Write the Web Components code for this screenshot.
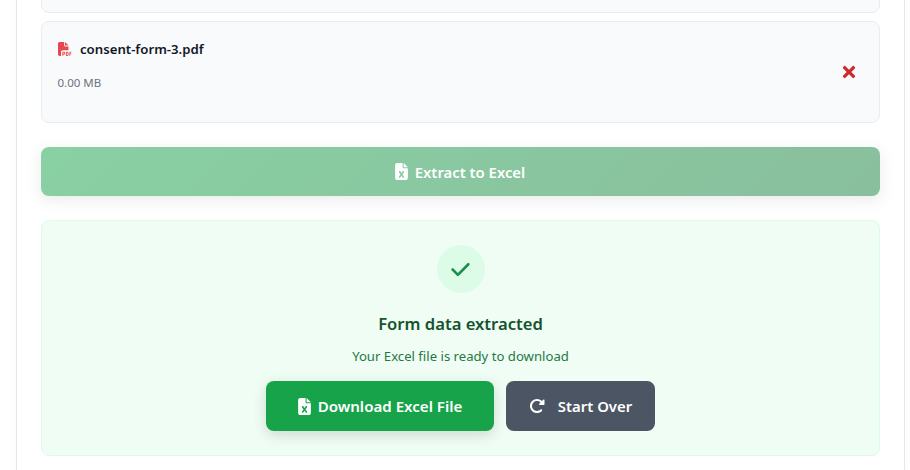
<!DOCTYPE html>
<html lang="en">
<head>
<meta charset="utf-8">
<title>Form extractor</title>
<style>
	html, body {
		margin: 0;
		height: 470px;
		overflow: hidden;
		background: #fff;
		font-family: "Noto Sans", "Open Sans", sans-serif;
	}
</style>
</head>
<body>
<app-card>
	<file-item></file-item>
	<file-item name="consent-form-3.pdf" size="0.00 MB"></file-item>
	<extract-button>Extract to Excel</extract-button>
	<success-panel heading="Form data extracted" message="Your Excel file is ready to download">
		<action-button icon="excel" kind="primary">Download Excel File</action-button>
		<action-button icon="redo" kind="secondary">Start Over</action-button>
	</success-panel>
</app-card>

<script>
const icons = {
	pdf: ['0 0 512 512', 'M0 64C0 28.7 28.7 0 64 0H224V128c0 17.7 14.3 32 32 32H384V304H176c-35.3 0-64 28.7-64 64V512H64c-35.3 0-64-28.7-64-64V64zm384 64H256V0L384 128zM176 352h32c30.9 0 56 25.1 56 56s-25.1 56-56 56H192v32c0 8.8-7.2 16-16 16s-16-7.2-16-16V448 368c0-8.8 7.2-16 16-16zm32 80c13.3 0 24-10.7 24-24s-10.7-24-24-24H192v48h16zm96-80h32c26.5 0 48 21.5 48 48v64c0 26.5-21.5 48-48 48H304c-8.8 0-16-7.2-16-16V368c0-8.8 7.2-16 16-16zm32 128c8.8 0 16-7.2 16-16V400c0-8.8-7.2-16-16-16H320v96h16zm80-112c0-8.8 7.2-16 16-16h48c8.8 0 16 7.2 16 16s-7.2 16-16 16H448v32h32c8.8 0 16 7.2 16 16s-7.2 16-16 16H448v48c0 8.8-7.2 16-16 16s-16-7.2-16-16V432 368z'],
	excel: ['0 0 384 512', 'M64 0C28.7 0 0 28.7 0 64V448c0 35.3 28.7 64 64 64H320c35.3 0 64-28.7 64-64V160H256c-17.7 0-32-14.3-32-32V0H64zM256 0V128H384L256 0zM155.7 250.2L192 302.1l36.3-51.9c7.6-10.9 22.6-13.5 33.4-5.9s13.5 22.6 5.9 33.4L221.3 344l46.4 66.2c7.6 10.9 5 25.8-5.9 33.4s-25.8 5-33.4-5.9L192 385.8l-36.3 51.9c-7.6 10.9-22.6 13.5-33.4 5.9s-13.5-22.6-5.9-33.4L162.7 344l-46.4-66.2c-7.6-10.9-5-25.8 5.9-33.4s25.8-5 33.4 5.9z'],
	times: ['0 0 352 512', 'M242.72 256l100.07-100.07c12.28-12.28 12.28-32.19 0-44.48l-22.24-22.24c-12.28-12.28-32.19-12.28-44.48 0L176 189.28 75.93 89.21c-12.28-12.28-32.19-12.28-44.48 0L9.21 111.45c-12.28 12.28-12.28 32.19 0 44.48L109.28 256 9.21 356.07c-12.28 12.28-12.28 32.19 0 44.48l22.24 22.24c12.28 12.28 32.2 12.28 44.48 0L176 322.72l100.07 100.07c12.28 12.28 32.2 12.28 44.48 0l22.24-22.24c12.28-12.28 12.28-32.19 0-44.48L242.72 256z'],
	check: ['0 0 512 512', 'M470.6 105.4c12.5 12.5 12.5 32.8 0 45.3l-256 256c-12.5 12.5-32.8 12.5-45.3 0l-128-128c-12.5-12.5-12.5-32.8 0-45.3s32.8-12.5 45.3 0L192 338.7 425.4 105.4c12.5-12.5 32.8-12.5 45.3 0z'],
	redo: ['0 0 512 512', 'M463.5 224H472c13.3 0 24-10.7 24-24V72c0-9.7-5.8-18.5-14.8-22.2s-19.3-1.7-26.2 5.2L413.4 96.6c-87.6-86.5-228.7-86.2-315.8 1c-87.5 87.5-87.5 229.3 0 316.8s229.3 87.5 316.8 0c12.5-12.5 12.5-32.8 0-45.3s-32.8-12.5-45.3 0c-62.5 62.5-163.8 62.5-226.3 0s-62.5-163.8 0-226.3c62.2-62.2 162.7-62.5 225.3-1L327 183c-6.9 6.9-8.9 17.2-5.2 26.2s12.5 14.8 22.2 14.8H463.5z'],
};

const svg = (name, size) => {
	const [box, d] = icons[name];
	return `<svg width="${size}" height="${size}" viewBox="${box}" fill="currentColor" aria-hidden="true"><path d="${d}"/></svg>`;
};

class AppCard extends HTMLElement {
	constructor() {
		super();
		this.attachShadow({ mode: 'open' });
		this.shadowRoot.innerHTML = `
			<style>
				:host {
					display: flex;
					flex-direction: column;
					gap: 24px;
					box-sizing: border-box;
					width: 889px;
					height: 560px;
					margin: -90px 0 0 16px;
					padding: 0 24px;
					background: #fff;
					border: 1px solid #e5e7eb;
					border-bottom: 0;
					box-shadow: 0 4px 12px rgba(0, 0, 0, .02);
				}
				::slotted(file-item:nth-of-type(2)) {
					margin-top: -16px;
				}
			</style>
			<slot></slot>
		`;
	}
}

class FileItem extends HTMLElement {
	constructor() {
		super();
		this.attachShadow({ mode: 'open' });
	}

	connectedCallback() {
		const name = this.getAttribute('name');
		const size = this.getAttribute('size');
		this.shadowRoot.innerHTML = `
			<style>
				:host {
					display: flex;
					align-items: center;
					justify-content: space-between;
					flex: none;
					box-sizing: border-box;
					height: 102px;
					padding: 0 21.5px 0 15.5px;
					background: #f9fafb;
					border: 1px solid #e9ebef;
					border-radius: 8px;
				}
				.title {
					display: flex;
					align-items: center;
					gap: 8.5px;
					margin-bottom: 17px;
					font-size: 13.2px;
					font-weight: 600;
					color: #111827;
				}
				.title svg { color: #e5484d; }
				.size { font-size: 11.5px; color: #6b7280; }
				.remove { display: flex; color: #cf2a2e; }
				.info { margin-bottom: 14px; }
			</style>
			${name ? `
				<div class="info">
					<div class="title">${svg('pdf', 14)}<span>${name}</span></div>
					<div class="size">${size}</div>
				</div>
				<div class="remove">${svg('times', 18)}</div>` : ''}
		`;
	}
}

class ExtractButton extends HTMLElement {
	constructor() {
		super();
		this.attachShadow({ mode: 'open' });
		this.shadowRoot.innerHTML = `
			<style>
				:host {
					display: flex;
					align-items: center;
					justify-content: center;
					gap: 5px;
					height: 49px;
					flex: none;
					padding-right: 3px;
					border-radius: 8px;
					color: #fff;
					font-size: 14.85px;
					font-weight: 600;
					background: linear-gradient(135deg, #16a34a, #15803d);
					box-shadow: 0 4px 14px rgba(0, 0, 0, .15);
					opacity: .5;
				}
			</style>
			${svg('excel', 17)}<slot></slot>
		`;
	}
}

class SuccessPanel extends HTMLElement {
	constructor() {
		super();
		this.attachShadow({ mode: 'open' });
	}

	connectedCallback() {
		this.shadowRoot.innerHTML = `
			<style>
				:host {
					display: flex;
					flex-direction: column;
					align-items: center;
					box-sizing: border-box;
					height: 236px;
					flex: none;
					padding-top: 24px;
					background: #f0fdf4;
					border: 1px solid #dcfce7;
					border-radius: 8px;
				}
				.badge {
					display: flex;
					align-items: center;
					justify-content: center;
					width: 48px;
					height: 48px;
					border-radius: 50%;
					background: #dcfce7;
					color: #1b8f4d;
				}
				h3 {
					margin: 19px 0 0;
					font-size: 16.6px;
					line-height: 24px;
					font-weight: 600;
					color: #14532d;
				}
				p {
					margin: 10px 0 0;
					font-size: 13.15px;
					line-height: 20px;
					color: #1f7a45;
				}
				.actions {
					display: flex;
					gap: 12px;
					margin-top: 15px;
				}
			</style>
			<div class="badge">${svg('check', 21)}</div>
			<h3>${this.getAttribute('heading')}</h3>
			<p>${this.getAttribute('message')}</p>
			<div class="actions"><slot></slot></div>
		`;
	}
}

class ActionButton extends HTMLElement {
	constructor() {
		super();
		this.attachShadow({ mode: 'open' });
	}

	connectedCallback() {
		const primary = this.getAttribute('kind') === 'primary';
		this.shadowRoot.innerHTML = `
			<style>
				:host {
					display: flex;
					align-items: center;
					justify-content: center;
					gap: ${primary ? 5 : 13}px;
					box-sizing: border-box;
					width: ${primary ? 228 : 149}px;
					height: 50px;
					padding-right: ${primary ? 2 : 0}px;
					border-radius: 8px;
					color: #fff;
					font-size: ${primary ? 15.1 : 14.9}px;
					font-weight: 600;
					background: ${primary ? '#16a34a' : '#4b5563'};
					${primary ? 'box-shadow: 0 4px 14px rgba(0, 0, 0, .14);' : ''}
				}
			</style>
			${svg(this.getAttribute('icon'), primary ? 17 : 16)}<slot></slot>
		`;
	}
}

customElements.define('app-card', AppCard);
customElements.define('file-item', FileItem);
customElements.define('extract-button', ExtractButton);
customElements.define('success-panel', SuccessPanel);
customElements.define('action-button', ActionButton);
</script>
</body>
</html>
